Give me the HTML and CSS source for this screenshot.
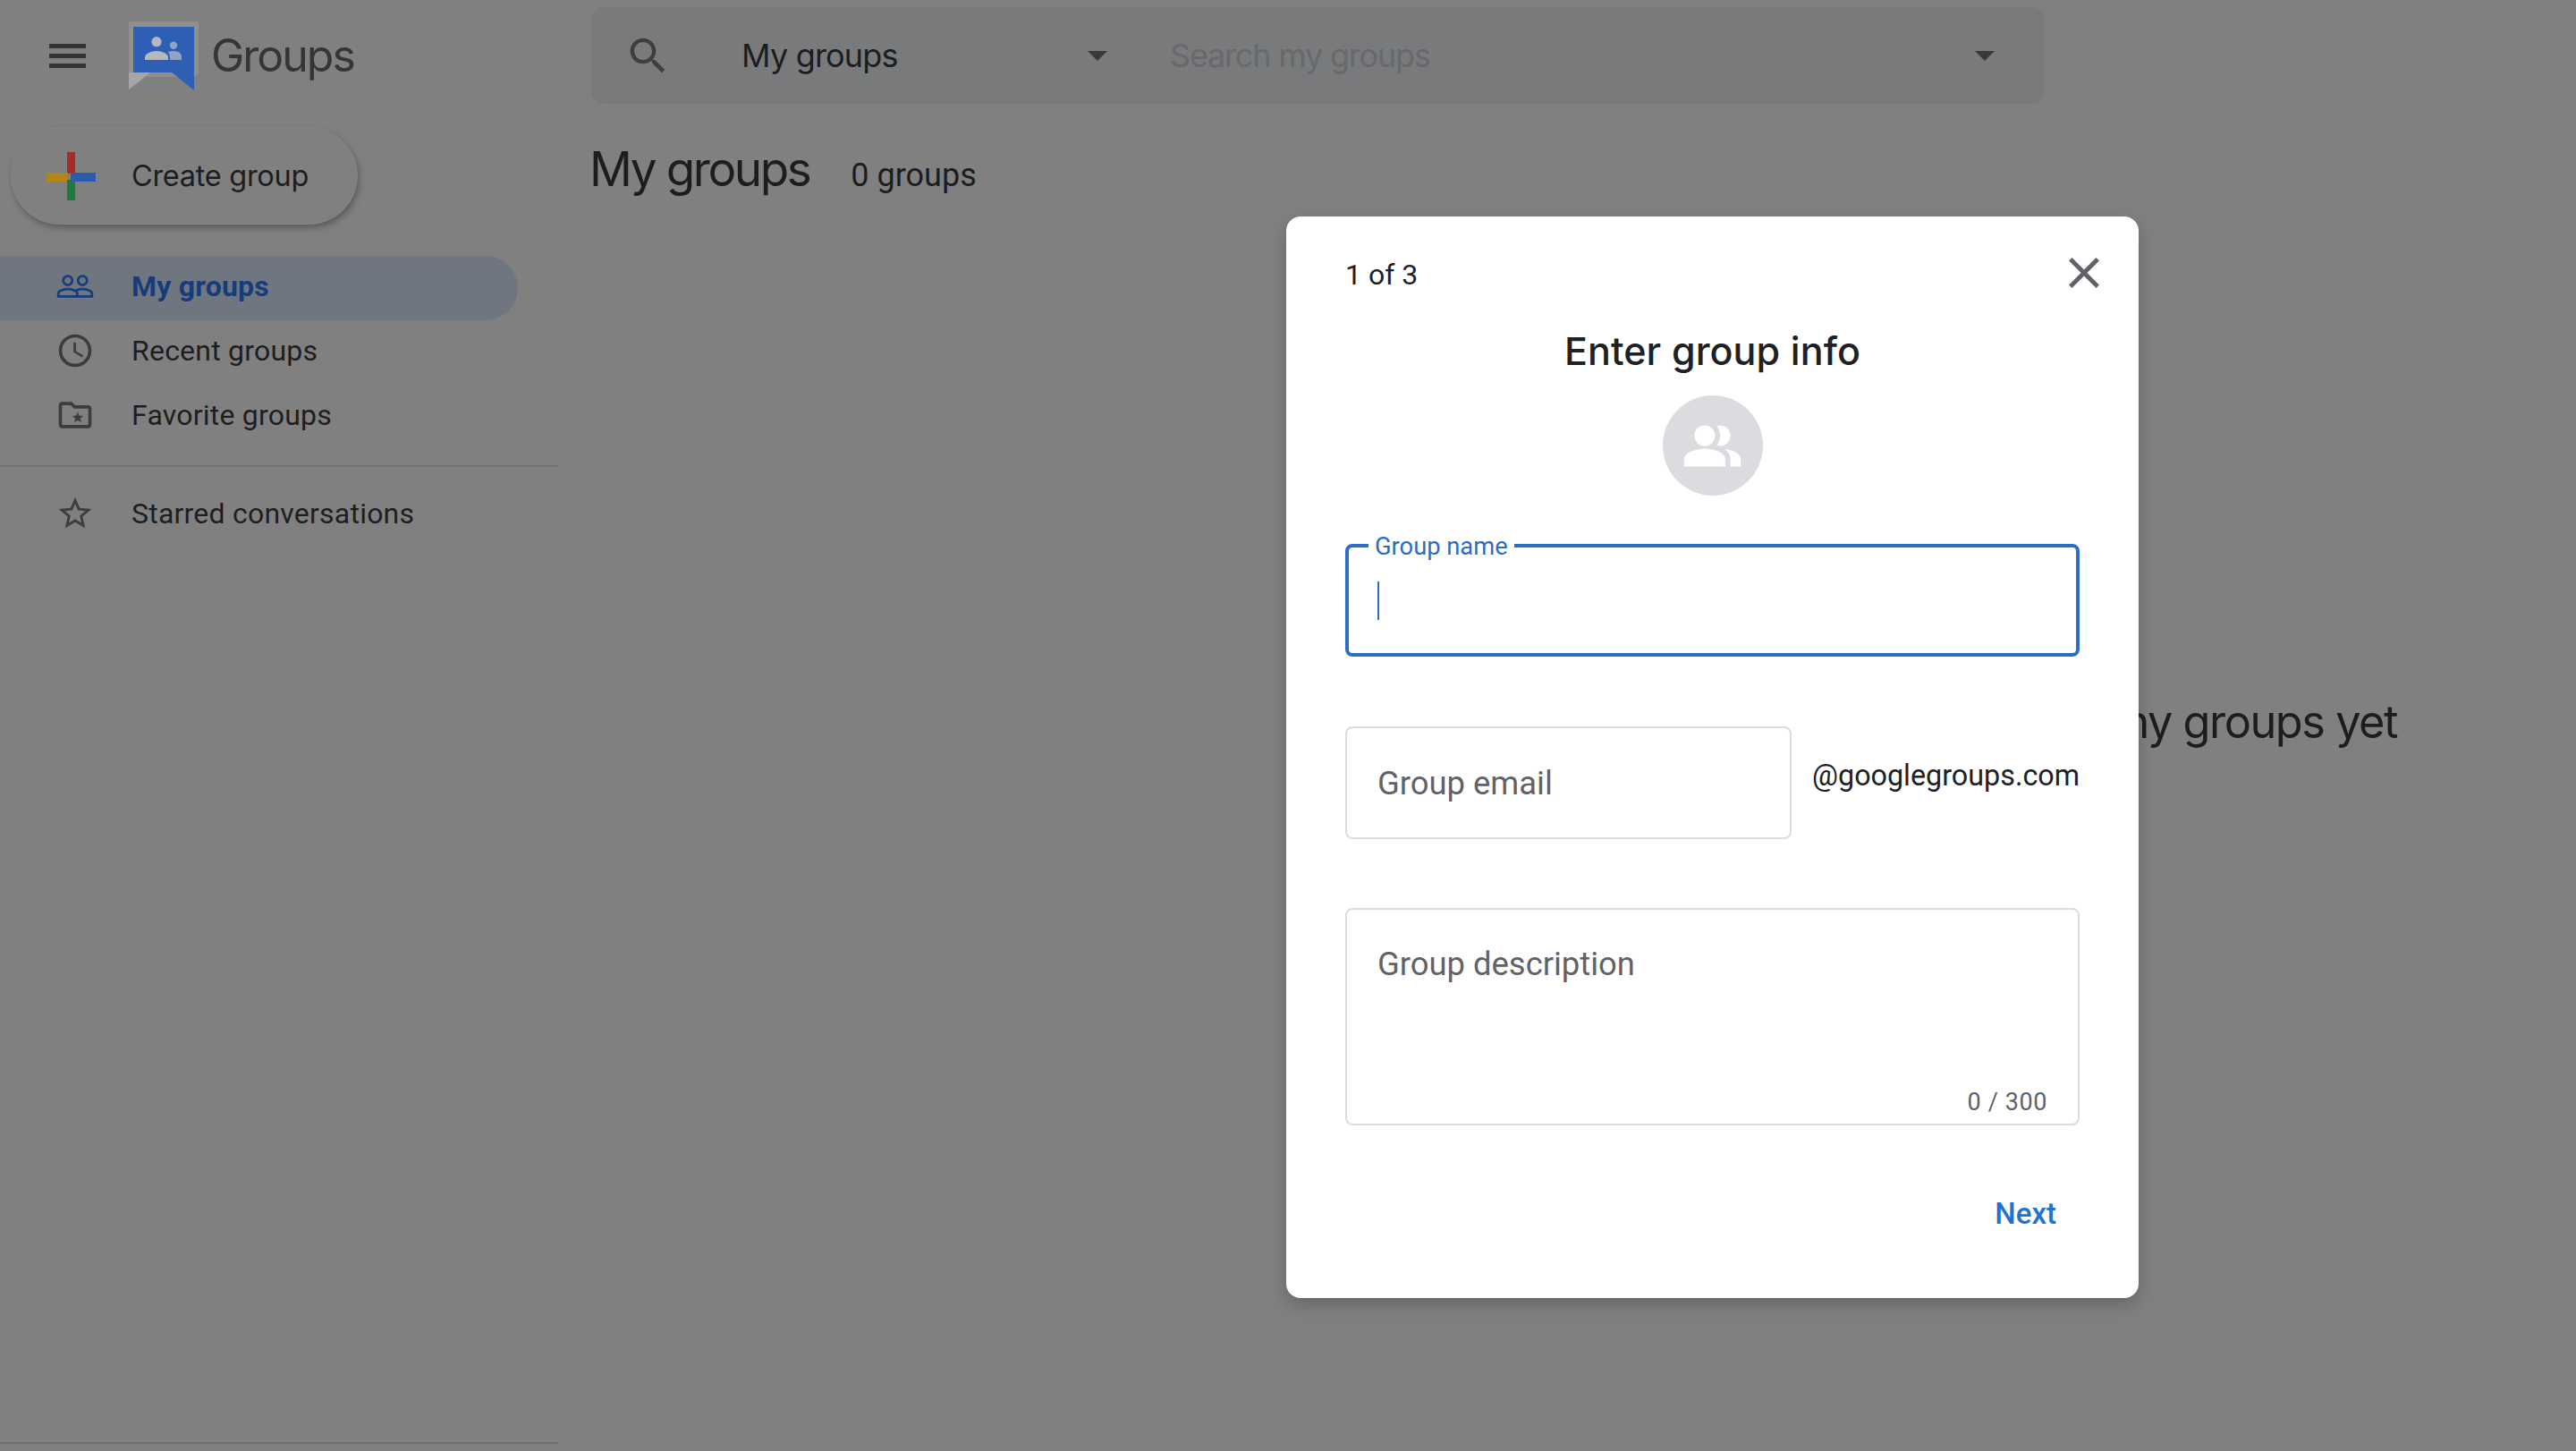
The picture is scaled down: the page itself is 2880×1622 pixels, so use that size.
FILE: index.html
```html
<!DOCTYPE html>
<html lang="en">
<head>
<meta charset="utf-8">
<title>Groups</title>
<link rel="stylesheet" href="styles.css">
</head>
<body>
<div class="app">
  <aside class="sidebar">
    <div class="brand">
      <div class="menu"><span></span><span></span><span></span></div>
      <svg class="logo" viewBox="0 0 78 77">
        <path fill="#8f8f8f" d="M0 0H78V58L73 62H18L0 76z"/>
        <path fill="#a6a6a6" d="M0 76V57H24L18 62z"/>
        <path fill="#2d60b4" d="M5 6H73V77L48 57H5z"/>
        <circle cx="31" cy="22.7" r="5.6" fill="#b4b8c0"/>
        <path fill="#b4b8c0" d="M18 43v-3c0-4 7-7 13-7s13 3 13 7v3z"/>
        <circle cx="50" cy="26.7" r="4.2" fill="#8ea3c6"/>
        <path fill="#8ea3c6" d="M46 43v-3c0-2-.6-4-2-6 2-.8 4-1 6-1 4 0 9 2 9 6v4z"/>
      </svg>
      <span class="brand-name">Groups</span>
    </div>
    <button class="create">
      <svg class="plus" viewBox="0 0 55 54">
        <rect x="23" y="0" width="9" height="24" fill="#a52d28"/>
        <rect x="0" y="23" width="24" height="10" fill="#b08714"/>
        <rect x="23" y="31" width="9" height="23" fill="#1f7a3c"/>
        <rect x="27" y="23" width="28" height="10" fill="#2b5cab"/>
      </svg>
      <span>Create group</span>
    </button>
    <nav class="nav">
      <a class="nav-row active">
        <svg class="nav-icon" viewBox="0 0 24 24"><path d="M16.5 13c-1.2 0-3.07.34-4.5 1-1.43-.67-3.3-1-4.5-1C5.33 13 1 14.08 1 16.25V19h22v-2.75c0-2.17-4.33-3.25-6.5-3.25zm-4 4.5h-10v-1.25c0-.54 2.56-1.75 5-1.75s5 1.21 5 1.75v1.25zm9 0H14v-1.25c0-.46-.2-.86-.52-1.22.88-.3 1.96-.53 3.02-.53 2.44 0 5 1.21 5 1.75v1.25zM7.5 12c1.93 0 3.5-1.57 3.5-3.5S9.43 5 7.5 5 4 6.57 4 8.5 5.57 12 7.5 12zm0-5.5c1.1 0 2 .9 2 2s-.9 2-2 2-2-.9-2-2 .9-2 2-2zm9 5.5c1.93 0 3.5-1.57 3.5-3.5S18.43 5 16.5 5 13 6.57 13 8.5s1.57 3.5 3.5 3.5zm0-5.5c1.1 0 2 .9 2 2s-.9 2-2 2-2-.9-2-2 .9-2 2-2z"/></svg>
        <span>My groups</span>
      </a>
      <a class="nav-row">
        <svg class="nav-icon" viewBox="0 0 24 24"><path d="M11.99 2C6.47 2 2 6.48 2 12s4.47 10 9.99 10C17.52 22 22 17.52 22 12S17.52 2 11.99 2zM12 20c-4.42 0-8-3.58-8-8s3.58-8 8-8 8 3.58 8 8-3.58 8-8 8zm.5-13H11v6l5.25 3.15.75-1.23-4.5-2.67z"/></svg>
        <span>Recent groups</span>
      </a>
      <a class="nav-row">
        <svg class="nav-icon" viewBox="0 0 24 24"><path d="M20 6h-8l-2-2H4c-1.1 0-2 .9-2 2v12c0 1.1.9 2 2 2h16c1.1 0 2-.9 2-2V8c0-1.1-.9-2-2-2zm0 12H4V6h5.17l1.41 1.41.59.59H20v10z"/><path d="M13.6 10l.9 2.3 2.5.2-1.9 1.6.6 2.4-2.1-1.3-2.1 1.3.6-2.4-1.9-1.6 2.5-.2z"/></svg>
        <span>Favorite groups</span>
      </a>
      <hr class="nav-rule">
      <a class="nav-row">
        <svg class="nav-icon" viewBox="0 0 24 24"><path d="M22 9.24l-7.19-.62L12 2 9.19 8.63 2 9.24l5.46 4.73L5.82 21 12 17.27 18.18 21l-1.63-7.03L22 9.24zM12 15.4l-3.76 2.27 1-4.28-3.32-2.88 4.38-.38L12 6.1l1.71 4.04 4.38.38-3.32 2.88 1 4.28L12 15.4z"/></svg>
        <span>Starred conversations</span>
      </a>
    </nav>
    <hr class="foot-rule">
  </aside>
  <main class="main">
    <div class="search">
      <svg class="search-icon" viewBox="0 0 24 24"><path d="M15.5 14h-.79l-.28-.27C15.41 12.59 16 11.11 16 9.5 16 5.91 13.09 3 9.5 3S3 5.91 3 9.5 5.91 16 9.5 16c1.61 0 3.09-.59 4.23-1.57l.27.28v.79l5 4.99L20.49 19l-4.99-5zm-6 0C7.01 14 5 11.99 5 9.5S7.01 5 9.5 5 14 7.01 14 9.5 11.99 14 9.5 14z"/></svg>
      <div class="scope"><span>My groups</span><i class="caret-down"></i></div>
      <div class="query"><span>Search my groups</span><i class="caret-down"></i></div>
    </div>
    <div class="title-row">
      <h1>My groups</h1>
      <span class="count">0 groups</span>
    </div>
    <p class="empty">You don't have any groups yet</p>
  </main>
</div>
<section class="dialog">
  <div class="dialog-top">
    <span class="step">1 of 3</span>
    <svg class="close" viewBox="0 0 24 24"><path d="M19 6.41L17.59 5 12 10.59 6.41 5 5 6.41 10.59 12 5 17.59 6.41 19 12 13.41 17.59 19 19 17.59 13.41 12z"/></svg>
  </div>
  <h2>Enter group info</h2>
  <div class="avatar">
    <svg viewBox="0 0 24 24"><path d="M16.67 13.13C18.04 14.06 19 15.32 19 17v3h4v-3c0-2.18-3.57-3.47-6.33-3.87z"/><circle cx="9" cy="8" r="4"/><path d="M15 12c2.21 0 4-1.79 4-4s-1.79-4-4-4c-.47 0-.91.1-1.33.24C14.5 5.27 15 6.58 15 8s-.5 2.73-1.33 3.76c.42.14.86.24 1.33.24z"/><path d="M9 13c-2.67 0-8 1.34-8 4v3h16v-3c0-2.66-5.33-4-8-4z"/></svg>
  </div>
  <div class="field focused">
    <span class="float-label">Group name</span>
    <i class="text-caret"></i>
  </div>
  <div class="email-row">
    <div class="field email"><span class="placeholder">Group email</span></div>
    <span class="domain">@googlegroups.com</span>
  </div>
  <div class="field desc">
    <span class="placeholder">Group description</span>
    <span class="counter">0 / 300</span>
  </div>
  <div class="actions"><button class="next">Next</button></div>
</section>
</body>
</html>
```
FILE: styles.css
```css
* { box-sizing: border-box; }
html, body { margin: 0; height: 100%; }
body {
  background: #808080;
  color: #1d1d1e;
  font-family: Roboto, "Liberation Sans", sans-serif;
  overflow: hidden;
}
.app { display: flex; height: 1622px; }

.sidebar { width: 624px; flex: none; display: flex; flex-direction: column; }
.brand { height: 124px; display: flex; align-items: center; padding-left: 55px; }
.menu { width: 41px; display: flex; flex-direction: column; gap: 6px; }
.menu span { height: 5px; background: #333436; }
.logo { width: 78px; height: 77px; margin-left: 48px; }
.brand-name {
  margin-left: 14px;
  font: 400 50px Inter, sans-serif;
  letter-spacing: -2px;
  color: #333537;
}
.create {
  margin: 18px 0 0 12px;
  width: 388px;
  height: 109px;
  border: 1px solid #858585;
  border-radius: 55px;
  background: #808080;
  box-shadow: 2px 4px 7px rgba(0, 0, 0, .28);
  display: flex;
  align-items: center;
  padding: 0 0 0 39px;
  color: #1d1d1e;
  font: 400 32.5px Inter, sans-serif;
  letter-spacing: -.3px;
}
.plus { width: 55px; height: 54px; margin-right: 40px; flex: none; }
.nav { margin-top: 35px; }
.nav-row {
  height: 72px;
  display: flex;
  align-items: center;
  padding: 0 0 4px 62px;
  font-size: 32px;
  letter-spacing: .22px;
  color: #1e1e1f;
}
.nav-row span { margin-left: 41px; }
.nav-icon { width: 44px; height: 44px; fill: #3c3d3f; flex: none; }
.nav-row.active {
  width: 579px;
  background: #70767f;
  border-radius: 0 36px 36px 0;
  color: #173c7c;
  font-weight: 700;
}
.nav-row.active .nav-icon { fill: #173c7c; }
.nav-rule { margin: 18px 0; border: 0; height: 2px; background: #737373; }
.foot-rule { margin: auto 0 8px; border: 0; height: 2px; background: #6f6f6f; }

.main { flex: 1; padding: 8px 0 0 37px; display: flex; flex-direction: column; }
.search {
  width: 1624px;
  height: 108px;
  background: #797a7c;
  border-radius: 14px;
  display: flex;
  align-items: center;
  padding-left: 37px;
}
.search-icon { width: 53px; height: 53px; fill: #3d3e40; flex: none; }
.scope, .query { display: flex; align-items: center; justify-content: space-between; }
.scope {
  width: 409px;
  margin-left: 78px;
  font: 400 36px Inter, sans-serif;
  letter-spacing: -.8px;
  color: #1d1d1e;
}
.query {
  width: 922px;
  margin-left: 70px;
  font: 400 36px Inter, sans-serif;
  letter-spacing: -1.2px;
  color: #67696b;
}
.caret-down {
  width: 0;
  height: 0;
  border-left: 11px solid transparent;
  border-right: 11px solid transparent;
  border-top: 11px solid #39393b;
}
.title-row { display: flex; align-items: baseline; margin-top: 41px; }
h1 {
  margin: 0 0 0 -2px;
  font: 400 53px Inter, sans-serif;
  letter-spacing: -2.4px;
  color: #1d1d1e;
}
.count { margin-left: 46px; font-size: 36px; color: #1d1d1e; }
.empty {
  margin: 555px 200px 0 0;
  text-align: right;
  font: 400 50.5px Inter, sans-serif;
  letter-spacing: -1.5px;
  color: #1d1d1e;
}

.dialog {
  position: absolute;
  left: 1438px;
  top: 242px;
  width: 953px;
  height: 1209px;
  padding: 40px 66px 0;
  background: #fff;
  border-radius: 16px;
  box-shadow: 0 8px 20px rgba(0, 0, 0, .2);
  display: flex;
  flex-direction: column;
}
.dialog-top { height: 46px; display: flex; align-items: center; justify-content: space-between; }
.step { padding-top: 3px; font-size: 32px; color: #202124; }
.close { width: 58px; height: 58px; fill: #5f6368; margin-right: -34px; }
h2 {
  margin: 35px 0 0;
  height: 58px;
  text-align: center;
  font: 500 43px/58px Inter, sans-serif;
  letter-spacing: .1px;
  color: #202124;
}
.avatar {
  width: 112px;
  height: 112px;
  margin: 21px auto 0;
  border-radius: 50%;
  background: #dadce0;
  display: flex;
  align-items: center;
  justify-content: center;
}
.avatar svg { width: 69px; height: 69px; fill: #fff; }
.field {
  position: relative;
  height: 126px;
  border: 2px solid #dadce0;
  border-radius: 8px;
  display: flex;
  padding: 0 0 0 34px;
  align-items: center;
}
.field.focused { margin-top: 54px; border: 4px solid #2b6cc4; padding-left: 32px; }
.float-label {
  position: absolute;
  left: 22px;
  top: -18px;
  padding: 0 7px;
  background: #fff;
  font-size: 27.3px;
  line-height: 34px;
  color: #2b6cc4;
}
.text-caret { width: 2px; height: 43px; background: #2b6cc4; }
.email-row { margin-top: 78px; display: flex; }
.field.email { width: 499px; flex: none; }
.placeholder { font-size: 36.4px; color: #5f6368; }
.domain { margin: 30px 0 0 23px; font-size: 32.3px; line-height: 50px; white-space: nowrap; color: #202124; }
.field.desc { margin-top: 77px; height: 243px; align-items: flex-start; padding-top: 39px; }
.counter {
  position: absolute;
  right: 34px;
  bottom: 8px;
  font-size: 27px;
  letter-spacing: .6px;
  color: #5f6368;
}
.actions { margin-top: 79px; display: flex; justify-content: flex-end; padding-right: 26px; }
.next {
  border: 0;
  padding: 0;
  background: none;
  font: 500 33px Roboto, sans-serif;
  color: #2272d0;
}
```
